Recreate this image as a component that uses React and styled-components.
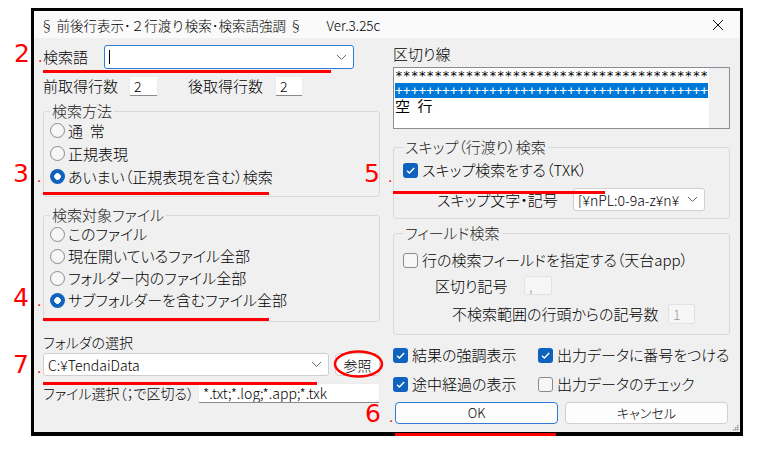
import React from 'react';
import styled, { createGlobalStyle, css } from 'styled-components';

const GlobalStyle = createGlobalStyle`
  html, body {
    margin: 0;
    padding: 0;
    background: #fff;
  }
  body {
    font-family: "Noto Sans CJK JP", "Noto Sans", sans-serif;
    font-feature-settings: "palt";
    font-weight: 300;
    color: #000;
  }
  * {
    box-sizing: border-box;
  }
`;

const Page = styled.div`
  position: relative;
  width: 763px;
  height: 451px;
  padding: 8px 0 0 31px;
  overflow: hidden;
`;

const Window = styled.div`
  position: relative;
  width: 712px;
  height: 428px;
  border: 3px solid #000;
  border-bottom-width: 4px;
  background: #f0f0f0;
  display: flex;
  flex-direction: column;
`;

const TitleBar = styled.div`
  flex: none;
  height: 27px;
  display: flex;
  align-items: center;
  padding-left: 6px;
  background: #fafafa;
  font-size: 13.5px;
  line-height: 16px;
  font-feature-settings: normal;
  white-space: nowrap;
`;

const Version = styled.span`
  margin-left: 24px;
`;

const CloseButton = styled.div`
  margin-left: auto;
  width: 44px;
  height: 27px;
  display: flex;
  align-items: center;
  justify-content: center;
`;

const Body = styled.div`
  flex: 1;
  display: grid;
  grid-template-columns: 337px 337px;
  column-gap: 13px;
  padding-left: 9px;
  font-size: 15px;
  line-height: 16px;
`;

const Column = styled.div`
  display: flex;
  flex-direction: column;
`;

const Row = styled.div`
  display: flex;
  align-items: center;
  height: ${(p) => p.$h}px;
  margin-top: ${(p) => p.$mt || 0}px;
  padding-left: ${(p) => p.$indent || 0}px;
`;

const Label = styled.span`
  flex: none;
  width: ${(p) => (p.$w ? `${p.$w}px` : 'auto')};
  margin-left: ${(p) => p.$ml || 0}px;
  font-size: ${(p) => p.$size || 15}px;
  white-space: nowrap;
`;

const Caption = styled.div`
  margin-top: ${(p) => p.$mt}px;
  font-size: ${(p) => p.$size || 15}px;
  line-height: 16px;
  white-space: nowrap;
`;

const Combo = styled.div`
  flex: none;
  width: ${(p) => p.$w}px;
  height: ${(p) => p.$h || 24}px;
  display: flex;
  align-items: center;
  padding: 0 6px 0 4px;
  background: #fff;
  border: 1px solid ${(p) => (p.$focus ? '#2f7bd6' : '#cfcfcf')};
  border-radius: 3px;
  font-size: 14px;
  overflow: hidden;
`;

const ComboText = styled.span`
  flex: 1;
  min-width: 0;
  white-space: nowrap;
  overflow: hidden;
`;

const Caret = styled.span`
  flex: none;
  width: 1px;
  height: 14px;
  background: #000;
  margin-right: auto;
`;

const Edit = styled.div`
  flex: none;
  width: ${(p) => p.$w}px;
  height: ${(p) => p.$h || 20}px;
  display: flex;
  align-items: center;
  padding-left: 4px;
  font-size: 14px;
  white-space: nowrap;
  overflow: hidden;
  border-radius: 2px;
  ${(p) =>
    p.$disabled
      ? css`
          background: #f6f6f6;
          border: 1px solid #e2e2e2;
          color: #9a9a9a;
        `
      : css`
          background: #fff;
          border: 1px solid #ececec;
          border-bottom-color: #8a8a8a;
        `}
`;

const Group = styled.fieldset`
  margin: ${(p) => p.$mt}px 0 0;
  padding: ${(p) => p.$pt || 0}px 0 ${(p) => p.$pb}px ${(p) => p.$pl}px;
  border: 1px solid #d9d9d9;
  border-radius: 3px;
  min-width: 0;
`;

const Legend = styled.legend`
  padding: 0 2px;
  font-size: 15px;
  line-height: 16px;
  color: #222;
`;

const Option = styled.div`
  display: flex;
  align-items: center;
  gap: ${(p) => p.$gap || 3}px;
  height: ${(p) => p.$h || 20}px;
  white-space: pre;
`;

const RadioMark = styled.span`
  flex: none;
  width: 15px;
  height: 15px;
  border-radius: 50%;
  ${(p) =>
    p.$on
      ? css`
          background: radial-gradient(circle, #fff 0 3px, #0f62be 3.6px);
        `
      : css`
          border: 1px solid #8b8b8b;
          background: #f6f6f6;
        `}
`;

const CheckBox = styled.span`
  flex: none;
  width: 15px;
  height: 15px;
  border-radius: 3px;
  display: flex;
  align-items: center;
  justify-content: center;
  ${(p) =>
    p.$on
      ? css`
          background: #0f62be;
        `
      : css`
          border: 1px solid #8b8b8b;
          background: #f6f6f6;
        `}
`;

const ListBox = styled.div`
  margin-top: 5px;
  height: 62px;
  display: flex;
  background: #fff;
  border: 1px solid #8a8f97;
`;

const ListItems = styled.div`
  flex: 1;
  min-width: 0;
  padding: 0 1px;
`;

const ListItem = styled.div`
  height: 15px;
  line-height: 15px;
  overflow: hidden;
  white-space: pre;
  font-family: ${(p) => (p.$cjk ? '"Noto Sans CJK JP", sans-serif' : '"DejaVu Sans Mono", monospace')};
  font-size: ${(p) => (p.$cjk ? 15 : 13)}px;
  font-weight: 400;
  background: ${(p) => (p.$selected ? '#0078d7' : 'transparent')};
  color: ${(p) => (p.$selected ? '#fff' : '#000')};
`;

const ScrollTrack = styled.div`
  flex: none;
  width: 20px;
  background: #f0f0f0;
`;

const CheckGrid = styled.div`
  margin-top: 10px;
  display: grid;
  grid-template-columns: 145px 1fr;
  grid-auto-rows: 20px;
  row-gap: 9px;
`;

const ButtonRow = styled.div`
  margin-top: 8px;
  padding-left: 2px;
  display: flex;
  gap: 7px;
`;

const Button = styled.div`
  flex: none;
  width: ${(p) => p.$w}px;
  height: ${(p) => p.$h || 22}px;
  margin-left: ${(p) => p.$ml || 0}px;
  display: flex;
  align-items: center;
  justify-content: center;
  background: #fdfdfd;
  border: 1px solid ${(p) => (p.$default ? '#2f7bd6' : '#d0d0d0')};
  border-radius: 4px;
  font-size: ${(p) => p.$size || 13}px;
`;

const Grip = styled.svg`
  position: absolute;
  right: 1px;
  bottom: 1px;
`;

/* red annotations drawn over the dialog */
const Num = styled.div`
  position: absolute;
  left: ${(p) => p.$x}px;
  top: ${(p) => p.$y}px;
  color: #f00;
  font-family: "DejaVu Sans", sans-serif;
  font-weight: 400;
  font-size: 25px;
  line-height: 24px;
  white-space: nowrap;
`;

const NumDot = styled.span`
  margin-left: 8px;
  font-size: 14px;
`;

const Mark = styled.div`
  position: absolute;
  left: ${(p) => p.$x}px;
  top: ${(p) => p.$y}px;
  width: ${(p) => p.$w}px;
  height: 3px;
  background: #f00;
`;

const Ring = styled.svg`
  position: absolute;
  left: 333px;
  top: 349px;
`;

const Chevron = () => (
  <svg width="11" height="7" viewBox="0 0 11 7">
    <path d="M1 1l4.5 4.5L10 1" fill="none" stroke="#666" strokeWidth="1" />
  </svg>
);

const Tick = () => (
  <svg width="11" height="11" viewBox="0 0 11 11">
    <path d="M2 5.8l2.4 2.3L9.2 3" fill="none" stroke="#fff" strokeWidth="1.4" />
  </svg>
);

const Check = ({ on, children }) => (
  <Option $gap={4}>
    <CheckBox $on={on}>{on && <Tick />}</CheckBox>
    {children}
  </Option>
);

const Radio = ({ on, h, children }) => (
  <Option $h={h}>
    <RadioMark $on={on} />
    {children}
  </Option>
);

const annotations = [
  { n: '2', x: 14, y: 42 },
  { n: '3', x: 13, y: 162 },
  { n: '4', x: 13, y: 286 },
  { n: '7', x: 13, y: 353 },
  { n: '5', x: 364, y: 162 },
  { n: '6', x: 365, y: 402 },
];

const underlines = [
  { x: 43, y: 70, w: 288 },
  { x: 43, y: 192, w: 226 },
  { x: 43, y: 318, w: 226 },
  { x: 393, y: 191, w: 212 },
  { x: 43, y: 382, w: 274 },
  { x: 395, y: 433, w: 161 },
];

const App = () => (
  <Page>
    <GlobalStyle />
    <Window>
      <TitleBar>
        <span>§ 前後行表示･２行渡り検索･検索語強調 §</span>
        <Version>Ver.3.25c</Version>
        <CloseButton>
          <svg width="12" height="12" viewBox="0 0 12 12">
            <path d="M1 1L11 11M11 1L1 11" stroke="#111" strokeWidth="1" />
          </svg>
        </CloseButton>
      </TitleBar>

      <Body>
        <Column>
          <Row $mt={7} $h={24}>
            <Label $w={61}>検索語</Label>
            <Combo $w={250} $focus>
              <Caret />
              <Chevron />
            </Combo>
          </Row>
          <Row $mt={7} $h={20}>
            <Label $w={86}>前取得行数</Label>
            <Edit $w={29}>2</Edit>
            <Label $w={87} $ml={30}>後取得行数</Label>
            <Edit $w={28}>2</Edit>
          </Row>

          <Group $mt={7} $pl={6} $pb={8}>
            <Legend>検索方法</Legend>
            <Radio h={23}>通  常</Radio>
            <Radio h={23}>正規表現</Radio>
            <Radio h={23} on>あいまい（正規表現を含む）検索</Radio>
          </Group>

          <Group $mt={10} $pl={6} $pb={10}>
            <Legend>検索対象ファイル</Legend>
            <Radio h={22}>このファイル</Radio>
            <Radio h={22}>現在開いているファイル全部</Radio>
            <Radio h={22}>フォルダー内のファイル全部</Radio>
            <Radio h={22} on>サブフォルダーを含むファイル全部</Radio>
          </Group>

          <Caption $mt={12} $size={14}>フォルダの選択</Caption>
          <Row $mt={3} $h={23}>
            <Combo $w={286} $h={23}>
              <ComboText>C:¥TendaiData</ComboText>
              <Chevron />
            </Combo>
            <Button $w={45} $h={23} $ml={6} $size={14}>参照</Button>
          </Row>
          <Row $mt={7} $h={20}>
            <Label $w={155} $size={14}>ファイル選択（；で区切る）</Label>
            <Edit $w={182}>*.txt;*.log;*.app;*.txk</Edit>
          </Row>
        </Column>

        <Column>
          <Caption $mt={8}>区切り線</Caption>
          <ListBox>
            <ListItems>
              <ListItem>{'*'.repeat(44)}</ListItem>
              <ListItem $selected>{'+'.repeat(44)}</ListItem>
              <ListItem $cjk>{'空\u2002行'}</ListItem>
            </ListItems>
            <ScrollTrack />
          </ListBox>

          <Group $mt={10} $pl={9} $pt={5} $pb={7}>
            <Legend>スキップ（行渡り）検索</Legend>
            <Check on>スキップ検索をする（TXK）</Check>
            <Row $mt={8} $h={23} $indent={34}>
              <Label $w={136}>スキップ文字・記号</Label>
              <Combo $w={132} $h={23}>
                <ComboText>[¥nPL:0-9a-z¥n¥</ComboText>
                <Chevron />
              </Combo>
            </Row>
          </Group>

          <Group $mt={6} $pl={9} $pt={9} $pb={10}>
            <Legend>フィールド検索</Legend>
            <Check>行の検索フィールドを指定する（天台app）</Check>
            <Row $mt={6} $h={19} $indent={32}>
              <Label $w={89}>区切り記号</Label>
              <Edit $w={28} $h={19} $disabled>,</Edit>
            </Row>
            <Row $mt={9} $h={20} $indent={49}>
              <Label $w={216}>不検索範囲の行頭からの記号数</Label>
              <Edit $w={27} $disabled>1</Edit>
            </Row>
          </Group>

          <CheckGrid>
            <Check on>結果の強調表示</Check>
            <Check on>出力データに番号をつける</Check>
            <Check on>途中経過の表示</Check>
            <Check>出力データのチェック</Check>
          </CheckGrid>

          <ButtonRow>
            <Button $w={163} $default>OK</Button>
            <Button $w={163}>キャンセル</Button>
          </ButtonRow>
        </Column>
      </Body>

      <Grip width="8" height="8" viewBox="0 0 8 8">
        <rect x="6" y="2" width="1.5" height="1.5" fill="#9a9a9a" />
        <rect x="4" y="4" width="1.5" height="1.5" fill="#9a9a9a" />
        <rect x="6" y="4" width="1.5" height="1.5" fill="#9a9a9a" />
        <rect x="2" y="6" width="1.5" height="1.5" fill="#9a9a9a" />
        <rect x="4" y="6" width="1.5" height="1.5" fill="#9a9a9a" />
        <rect x="6" y="6" width="1.5" height="1.5" fill="#9a9a9a" />
      </Grip>
    </Window>

    {annotations.map((a) => (
      <Num key={a.n} $x={a.x} $y={a.y}>
        {a.n}
        <NumDot>.</NumDot>
      </Num>
    ))}
    {underlines.map((u) => (
      <Mark key={`${u.x}-${u.y}`} $x={u.x} $y={u.y} $w={u.w} />
    ))}
    <Ring width="51" height="30" viewBox="0 0 51 30">
      <ellipse cx="25.5" cy="15" rx="23.5" ry="12.5" fill="none" stroke="#f00" strokeWidth="2.5" />
    </Ring>
  </Page>
);

export default App;
